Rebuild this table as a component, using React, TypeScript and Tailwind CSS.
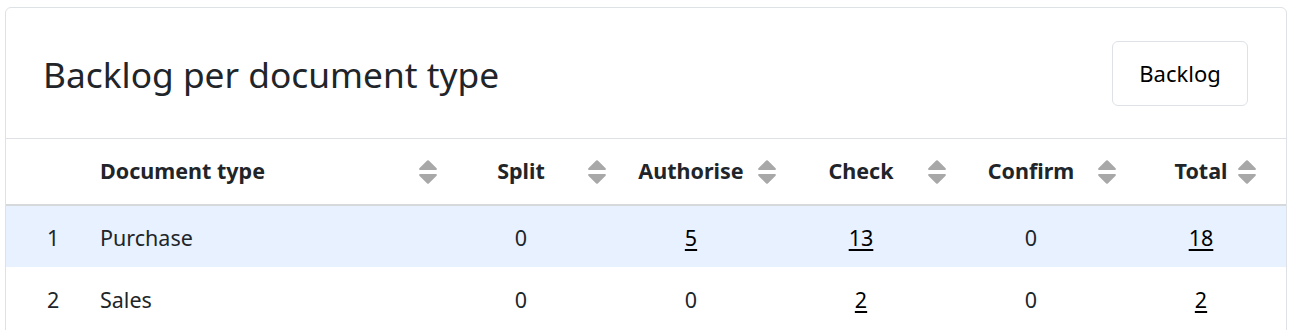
import React from 'react'

const SortIcon = () => (
  <svg width="18" height="24" viewBox="0 0 18 24" className="text-[#a8a8a8]">
    <path d="M1.2 10h15.6c.9 0 1.4-1 .8-1.7L9.8.6a1.1 1.1 0 0 0-1.6 0L.4 8.3C-.2 9 .3 10 1.2 10z" fill="currentColor" />
    <path d="M1.2 14h15.6c.9 0 1.4 1 .8 1.7l-7.8 7.7a1.1 1.1 0 0 1-1.6 0L.4 15.7C-.2 15 .3 14 1.2 14z" fill="currentColor" />
  </svg>
)

type Row = { id: number; type: string; split: number; authorise: number; check: number; confirm: number; total: number }

const rows: Row[] = [
  { id: 1, type: 'Purchase', split: 0, authorise: 5, check: 13, confirm: 0, total: 18 },
  { id: 2, type: 'Sales', split: 0, authorise: 0, check: 2, confirm: 0, total: 2 },
]

const Num = ({ value }: { value: number }) =>
  value > 0 ? (
    <a href="#" className="text-black underline underline-offset-[3px]">
      {value}
    </a>
  ) : (
    <span>{value}</span>
  )

export default function App() {
  return (
    <div className="min-h-screen bg-white pt-[7px] pl-[5px] text-[#212529]" style={{ fontFamily: '"Noto Sans", sans-serif' }}>
      <div className="w-[1282px] border border-[#dee2e6] rounded-[6px] overflow-hidden bg-white">
        {/* Header */}
        <div className="h-[131px] flex items-center justify-between pl-[37px] pr-[38px] border-b border-[#dee2e6]">
          <h2 className="text-[35.3px] font-normal leading-none mt-[3px]">Backlog per document type</h2>
          <button className="w-[136px] h-[65px] border border-[#dee2e6] rounded-[6px] text-[22px] text-black bg-white">
            Backlog
          </button>
        </div>

        {/* Table */}
        <table className="table-fixed w-full border-collapse text-[21.5px]">
          <colgroup>
            <col className="w-[86px]" />
            <col className="w-[352px]" />
            <col className="w-[169px]" />
            <col className="w-[170px]" />
            <col className="w-[170px]" />
            <col className="w-[170px]" />
            <col />
          </colgroup>
          <thead>
            <tr className="h-[66px] border-b-2 border-[#d6d9dc] font-bold">
              <th></th>
              <th className="relative text-left pl-2 font-bold">
                Document type
                <span className="absolute right-[7px] top-1/2 -translate-y-1/2 flex"><SortIcon /></span>
              </th>
              <th className="relative text-center pl-2 pr-[23px] font-bold">
                Split
                <span className="absolute right-[7px] top-1/2 -translate-y-1/2 flex"><SortIcon /></span>
              </th>
              <th className="relative text-center pl-2 pr-[22px] font-bold">
                Authorise
                <span className="absolute right-[7px] top-1/2 -translate-y-1/2 flex"><SortIcon /></span>
              </th>
              <th className="relative text-center pl-2 pr-[22px] font-bold">
                Check
                <span className="absolute right-[7px] top-1/2 -translate-y-1/2 flex"><SortIcon /></span>
              </th>
              <th className="relative text-center pl-2 pr-[22px] font-bold">
                Confirm
                <span className="absolute right-[7px] top-1/2 -translate-y-1/2 flex"><SortIcon /></span>
              </th>
              <th className="relative text-center pl-2 pr-[15px] font-bold">
                Total
                <span className="absolute right-[30px] top-1/2 -translate-y-1/2 flex"><SortIcon /></span>
              </th>
            </tr>
          </thead>
          <tbody>
            {rows.map((r, i) => (
              <tr key={r.id} className={i === 0 ? 'h-[62px] bg-[#e7f1ff]' : 'h-[63px]'}>
                <td className="pt-[3px] pl-[41px] text-left">{r.id}</td>
                <td className="pt-[3px] pl-2 text-left">{r.type}</td>
                <td className="pt-[3px] text-center pl-2 pr-[23px]"><Num value={r.split} /></td>
                <td className="pt-[3px] text-center pl-2 pr-[22px]"><Num value={r.authorise} /></td>
                <td className="pt-[3px] text-center pl-2 pr-[22px]"><Num value={r.check} /></td>
                <td className="pt-[3px] text-center pl-2 pr-[22px]"><Num value={r.confirm} /></td>
                <td className="pt-[3px] text-center pl-2 pr-[15px]"><Num value={r.total} /></td>
              </tr>
            ))}
            <tr className="h-[40px]">
              <td colSpan={7}></td>
            </tr>
          </tbody>
        </table>
      </div>
    </div>
  )
}
